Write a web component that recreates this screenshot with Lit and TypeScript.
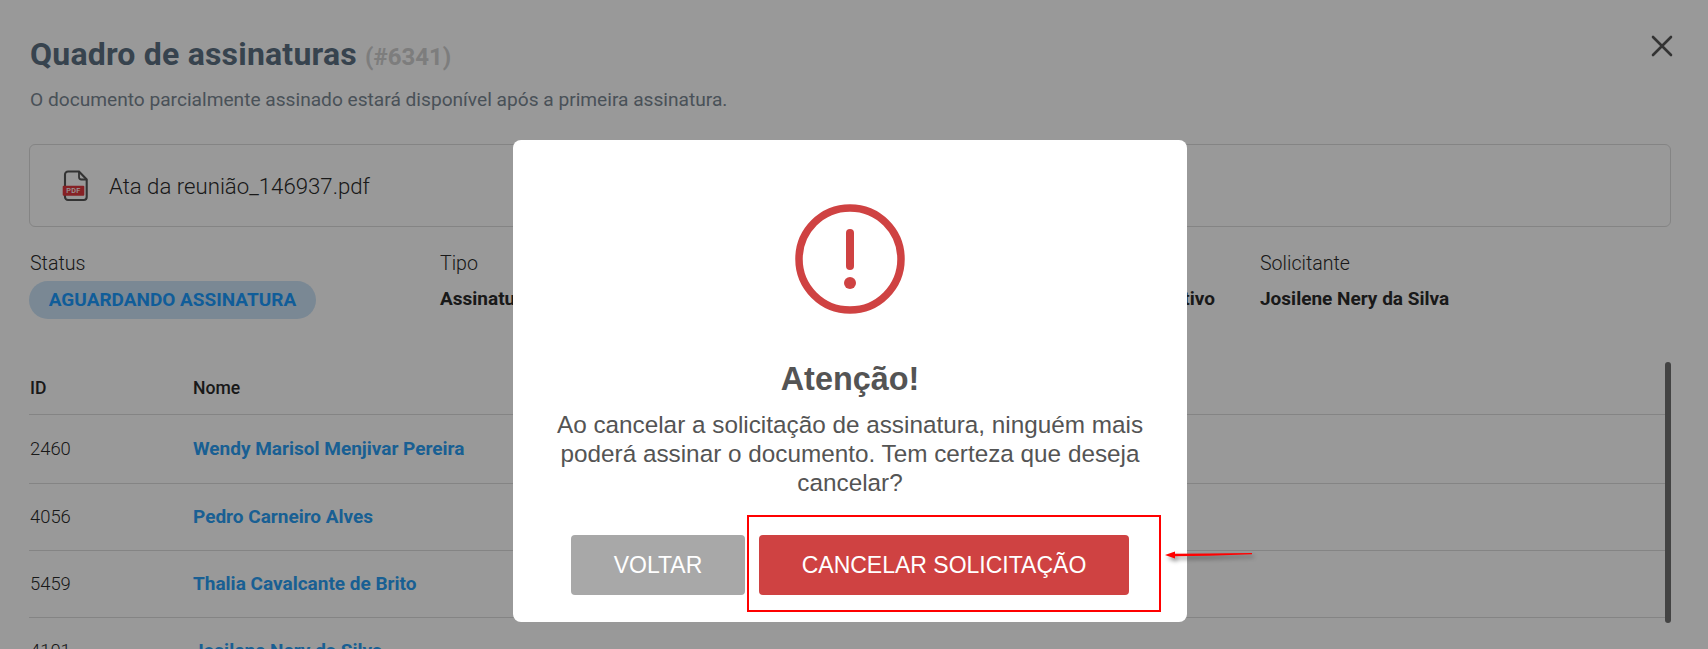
import { LitElement, html, css } from "lit";
import { customElement } from "lit/decorators.js";

@customElement("app-root")
export class AppRoot extends LitElement {
  static styles = css`
    :host { display: block; position: relative; width: 1708px; height: 649px; overflow: hidden; background: #fff; font-family: Roboto, sans-serif; }
    .page { padding: 34px 37px 0 29px; box-sizing: border-box; height: 649px; overflow: hidden; }
    .head { display: flex; justify-content: space-between; align-items: flex-start; height: 40px; }
    h1 { margin: 0; font-size: 32px; line-height: 40px; font-weight: 700; color: #5c7082; padding-left: 1px; letter-spacing: .2px; }
    h1 span { font-size: 24px; color: #d0d0d0; letter-spacing: 0; }
    .close { margin: 1px -2px 0 0; width: 22px; height: 22px; color: #555; display: block; }
    .sub { margin: 14px 0 0; padding-left: 1px; font-size: 19.15px; line-height: 24px; color: #7a8793; }
    .file { margin-top: 32px; height: 83px; box-sizing: border-box; border: 1px solid #dcdcdc; border-radius: 6px; display: flex; align-items: center; gap: 21px; padding-left: 32px; font-size: 22.2px; font-weight: 300; color: #2b2b2b; }
    .file svg { display: block; width: 26px; height: 32px; }
    .meta { margin-top: 25px; padding-left: 1px; display: grid; grid-template-columns: 410px 410px 410px 1fr; }
    .lab { font-size: 19.6px; font-weight: 300; line-height: 24px; color: #2b2b2b; }
    .val { margin-top: 5px; height: 38px; box-sizing: border-box; display: flex; align-items: center; font-size: 19px; font-weight: 700; color: #2b2b2b; white-space: nowrap; }
    .val.plain { padding-bottom: 4px; }
    .end { justify-content: flex-end; padding-right: 45px; margin-top: 29px; }
    .badge { margin-left: -1px; width: 287px; height: 38px; box-sizing: border-box; padding-bottom: 2px; border-radius: 19px; background: #cbe3f7; color: #1c9bff; font-size: 19px; font-weight: 700; display: flex; align-items: center; justify-content: center; }
    .row { display: grid; grid-template-columns: 163px 1fr; padding-left: 1px; padding-bottom: 2px; border-bottom: 1px solid #dcdcdc; align-items: center; height: 67px; box-sizing: border-box; font-size: 18.4px; font-weight: 300; color: #2b2b2b; }
    .row.h { margin-top: 43px; height: 53px; font-size: 17.6px; font-weight: 500; padding-bottom: 1px; }
    .row.first { height: 69px; }
    .row a { color: #2a9ff5; font-weight: 700; font-size: 19px; text-decoration: none; }
    .bar { position: absolute; left: 1665px; top: 362px; width: 6px; height: 261px; border-radius: 3px; background: #707070; }
    .overlay { position: absolute; inset: 0; background: rgba(0, 0, 0, .4); display: flex; justify-content: center; align-items: flex-start; padding: 140px 8px 0 0; box-sizing: border-box; }
    .modal { width: 674px; height: 482px; background: #fff; border-radius: 8px; display: flex; flex-direction: column; align-items: center; font-family: "Liberation Sans", Arial, sans-serif; color: #545454; }
    .modal svg { display: block; margin-top: 64px; width: 110px; height: 110px; }
    h2 { margin: 45px 0 0; font-size: 32.4px; line-height: 40px; font-weight: 700; color: #545454; }
    .msg { margin: 11px 0 0; width: 610px; text-align: center; font-size: 24.3px; line-height: 29px; }
    .btns { margin-top: 38px; display: flex; gap: 14px; }
    button { height: 60px; border: 0; border-radius: 4px; color: #fff; font-family: inherit; font-size: 23px; padding: 0; }
    .back { width: 174px; background: #a8a8a8; }
    .cancel { width: 370px; background: #cf4242; }
    .mark { position: absolute; left: 747px; top: 515px; width: 414px; height: 97px; box-sizing: border-box; border: 2px solid #f00; }
    .arrow { position: absolute; left: 1164px; top: 545px; width: 95px; height: 20px; display: block; filter: drop-shadow(2px 3px 2px rgba(0, 0, 0, .45)); }
  `;

  render() {
    const rows = [
      ["2460", "Wendy Marisol Menjivar Pereira"],
      ["4056", "Pedro Carneiro Alves"],
      ["5459", "Thalia Cavalcante de Brito"],
      ["4101", "Josilene Nery da Silva"],
    ];
    return html`
      <div class="page">
        <div class="head">
          <h1>Quadro de assinaturas <span>(#6341)</span></h1>
          <svg class="close" viewBox="0 0 22 22" fill="none" stroke="currentColor" stroke-width="2.6" stroke-linecap="round"><path d="M2 2 L20 20 M20 2 L2 20"/></svg>
        </div>
        <p class="sub">O documento parcialmente assinado estará disponível após a primeira assinatura.</p>
        <div class="file">
          <svg viewBox="0 0 26 32" fill="none">
            <path d="M6 1.5 H17 L24.7 9.5 V27 a3 3 0 0 1 -3 3 H6 a3 3 0 0 1 -3 -3 V4.5 a3 3 0 0 1 3 -3 Z" stroke="#555" stroke-width="2.1"/>
            <path d="M17 1.5 V7 a2.5 2.5 0 0 0 2.5 2.5 H24.7" stroke="#555" stroke-width="1.8"/>
            <rect x="0.7" y="15.7" width="21.6" height="10" rx="1" fill="#e0383e"/>
            <text x="11.5" y="23.4" text-anchor="middle" font-family="Roboto, sans-serif" font-size="7.2" font-weight="500" letter-spacing=".4" fill="#fff">PDF</text>
          </svg>
          <span>Ata da reunião_146937.pdf</span>
        </div>
        <div class="meta">
          <div><div class="lab">Status</div><div class="val"><span class="badge">AGUARDANDO ASSINATURA</span></div></div>
          <div><div class="lab">Tipo</div><div class="val plain">Assinatura</div></div>
          <div><div class="val plain end">Administrativo</div></div>
          <div><div class="lab">Solicitante</div><div class="val plain">Josilene Nery da Silva</div></div>
        </div>
        <div class="row h"><span>ID</span><span>Nome</span></div>
        ${rows.map((r, i) => html`<div class="row ${i === 0 ? "first" : ""}"><span>${r[0]}</span><a>${r[1]}</a></div>`)}
      </div>
      <div class="bar"></div>
      <div class="overlay">
        <div class="modal">
          <svg viewBox="0 0 110 110" fill="none">
            <circle cx="55" cy="55" r="51" stroke="#cf4242" stroke-width="7.5"/>
            <path d="M55 29 V62" stroke="#cf4242" stroke-width="8" stroke-linecap="round"/>
            <circle cx="55" cy="79" r="6" fill="#cf4242"/>
          </svg>
          <h2>Atenção!</h2>
          <p class="msg">Ao cancelar a solicitação de assinatura, ninguém mais poderá assinar o documento. Tem certeza que deseja cancelar?</p>
          <div class="btns">
            <button class="back">VOLTAR</button>
            <button class="cancel">CANCELAR SOLICITAÇÃO</button>
          </div>
        </div>
        <div class="mark"></div>
        <svg class="arrow" viewBox="0 0 95 20" fill="none">
          <path d="M1 10 L11 6.5 V8.8 L45 8.6 L88 8 V9.2 L45 10.8 L11 11.2 V13.5 Z" fill="#f00"/>
        </svg>
      </div>
    `;
  }
}
